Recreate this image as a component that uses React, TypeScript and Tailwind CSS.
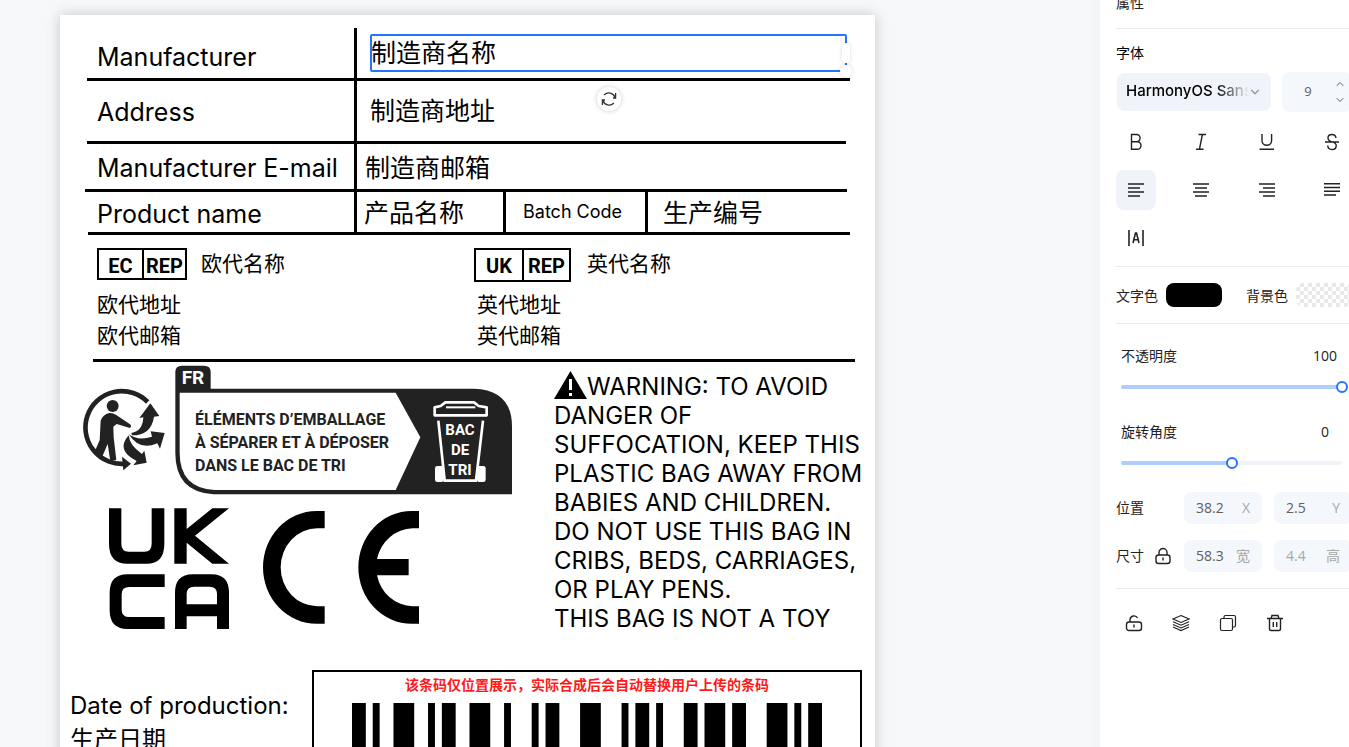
import React, { useState } from 'react';
import { ChevronDown, ChevronUp } from 'lucide-react';

interface IconProps {
  children: React.ReactNode;
}

interface SliderProps {
  id: string;
  label: string;
  min: number;
  max: number;
  value: number;
  onChange: (value: number) => void;
}

interface NumberBoxProps {
  label: string;
  unit: string;
  value: string;
  disabled?: boolean;
}

// [first module, width in modules]
const BARS = [
  [0, 2], [3, 1], [6, 3], [11, 1], [13, 2], [17, 3], [22, 1], [26, 1], [28, 2], [33, 3],
  [39, 1], [41, 2], [44, 1], [48, 2], [51, 3], [55, 2], [60, 3], [64, 1], [66, 2],
];

const Icon: React.FC<IconProps> = ({ children }) => (
  <svg width="18" height="18" viewBox="0 0 18 18" fill="none" stroke="currentColor" strokeWidth="1.4" aria-hidden="true">
    {children}
  </svg>
);

const styleTools = [
  { name: 'Bold', icon: <path d="M4.5 1.5H9.5A3.6 3.6 0 0 1 9.5 8.7H4.5ZM4.5 8.7H10.2A3.8 3.8 0 0 1 10.2 16.3H4.5Z" /> },
  { name: 'Italic', icon: <path d="M6.5 1.5H14M4 16.3H11.5M10.4 1.5L7.4 16.3" /> },
  { name: 'Underline', icon: <path d="M4 1V7.5A4.8 4.8 0 0 0 13.6 7.5V1M1.5 16.3H16" /> },
  { name: 'Strikethrough', icon: <path d="M13 5C12.6 2.5 11 1.5 9 1.5C6.5 1.5 5 3 5 5C5 7.5 7 8.3 9.2 8.9C11.8 9.6 13.2 10.6 13.2 12.7C13.2 15 11.5 16.5 9 16.5C6.5 16.5 4.9 15 4.7 12.5M2 9H16" /> },
];

const alignTools = [
  { name: 'Align left', icon: <path strokeWidth="1.7" d="M1 3H17M1 7H13M1 11H17M1 15H13" /> },
  { name: 'Align center', icon: <path strokeWidth="1.7" d="M1 3H17M3 7H15M1 11H17M3 15H15" /> },
  { name: 'Align right', icon: <path strokeWidth="1.7" d="M1 3H17M5 7H17M1 11H17M5 15H17" /> },
  { name: 'Justify', icon: <path strokeWidth="1.6" d="M1 2.8H17M1 6.5H17M1 10.2H17M1 14H13" /> },
];

const layerTools = [
  { name: 'Unlock', icon: <><rect x="1.5" y="8" width="15" height="8.5" rx="2.5" /><path d="M5 8V5.5A4 4 0 0 1 12.5 4M9 10.5V13.5" /></> },
  { name: 'Layers', icon: <path strokeWidth="1.1" d="M9 1.5L17 5L9 8.5L1 5ZM1 7.7L9 11.2L17 7.7M1 10.4L9 13.9L17 10.4M1 13.1L9 16.6L17 13.1" /> },
  { name: 'Copy', icon: <g strokeWidth="1.2"><rect x="1.5" y="4.5" width="12" height="12" rx="1.5" /><path d="M5 4V3A1.5 1.5 0 0 1 6.5 1.5H15A1.5 1.5 0 0 1 16.5 3V11.5A1.5 1.5 0 0 1 15 13H14" /></g> },
  { name: 'Delete', icon: <path d="M1 4.5H17M5 4.5L6 1.5H12L13 4.5M3.5 4.5V15A1.5 1.5 0 0 0 5 16.5H13A1.5 1.5 0 0 0 14.5 15V4.5M7.3 8V13M10.7 8V13" /> },
];

const FrenchSortingLogo: React.FC = () => (
  <svg className="absolute left-[10px] top-[345px] font-bold [font-family:Roboto,sans-serif]" width="450" height="140" role="img" aria-label="Triman">
    <g transform="scale(0.33333)">
      <path d="M233 126A109 109 0 1 0 166 311" fill="none" stroke="#222" strokeWidth="14" />
      <path d="M156 290L183 311L160 331Z" fill="#222" />
      <circle cx="128" cy="138" r="18" fill="#222" />
      <path d="M92 182Q98 164 118 159Q128 158 140 166L180 193Q186 198 180 204L140 192L130 200L131 232L139 300L121 304L113 252L94 296L72 280L89 240Z" fill="#222" />
      <path d="M184 219Q218 214 220 172L208 174L241 130L268 168L252 170Q244 226 186 226Z" fill="#222" />
      <path d="M176 222Q204 244 246 230L242 214L284 219L270 266L262 250Q208 274 176 222Z" fill="#222" />
      <path d="M176 226Q178 256 216 282L223 272L230 308L190 316L200 303Q136 272 176 226Z" fill="#222" />
      <path d="M316 90V36Q316 17 336 17H402Q422 17 422 36V86H1212Q1326 90 1326 200V403H430Q316 396 316 280Z" fill="#222" />
      <path d="M329 98H977L1051 232L977 390H434Q329 384 329 278Z" fill="#fff" />
      <g fill="none" stroke="#fff" strokeWidth="8">
        <path d="M1094 142L1112 138L1126 127H1212L1226 138L1250 142V166H1094Z" strokeLinejoin="round" />
        <path d="M1128 142H1216" strokeWidth="6" />
        <path d="M1105 182L1124 362H1218L1239 182" />
      </g>
      <rect x="1095" y="318" width="26" height="48" rx="7" fill="#fff" />
      <rect x="1221" y="318" width="26" height="48" rx="7" fill="#fff" />
    </g>
    <g fill="#fff" textAnchor="middle">
      <text x="123" y="24" fontSize="19">FR</text>
      <text x="390" y="75" fontSize="15">BAC</text>
      <text x="390" y="95" fontSize="15">DE</text>
      <text x="390" y="115" fontSize="15">TRI</text>
    </g>
    <g fill="#222" fontSize="16">
      <text x="125" y="65">ÉLÉMENTS D’EMBALLAGE</text>
      <text x="125" y="88">À SÉPARER ET À DÉPOSER</text>
      <text x="125" y="111">DANS LE BAC DE TRI</text>
    </g>
  </svg>
);

const ConformityMarks: React.FC = () => (
  <svg className="absolute left-[30px] top-[480px]" width="350" height="145" viewBox="0 0 1050 435" role="img" aria-label="UKCA CE">
    <path d="M57 40H94V146Q94 170 116 170H163Q185 170 185 146V40H223V146Q223 206 170 206H112Q57 206 57 146Z" />
    <path d="M253 40H290V102L367 40H417L315 122L417 206H367L290 143V206H253Z" />
    <path d="M224 238V276H118Q95 276 95 298V344Q95 366 118 366H224V402H112Q59 402 59 346V294Q59 238 112 238Z" />
    <path fillRule="evenodd" d="M255 402V294Q255 238 308 238H365Q417 238 417 294V402H381V364H290V402ZM290 328H381V297Q381 275 358 275H313Q290 275 290 297Z" />
    <path d="M704 48H680A161 169 0 0 0 680 386H704V334H682A110 117 0 0 1 682 100H704Z" />
    <path d="M987 48H965A160 169 0 0 0 965 386H987V334H968A112 117 0 0 1 861 241H956V192H861A112 117 0 0 1 968 100H987Z" />
  </svg>
);

const LabelPaper: React.FC = () => (
  <div className="relative h-[1000px] w-[815px] shrink-0 bg-white text-black shadow-[0_0_14px_rgba(0,0,0,0.2)] [font-family:Inter,'Noto_Sans_CJK_SC',sans-serif]">
    {/* rules */}
    <div className="absolute left-[27px] top-[63px] h-[3px] w-[763px] bg-black" />
    <div className="absolute left-[27px] top-[126px] h-[3px] w-[759px] bg-black" />
    <div className="absolute left-[25px] top-[174px] h-[3px] w-[762px] bg-black" />
    <div className="absolute left-[28px] top-[217px] h-[3px] w-[762px] bg-black" />
    <div className="absolute left-[33px] top-[344px] h-[3px] w-[762px] bg-black" />
    <div className="absolute left-[294px] top-[13px] h-[205px] w-[3px] bg-black" />
    <div className="absolute left-[443px] top-[175px] h-[43px] w-[3px] bg-black" />
    <div className="absolute left-[585px] top-[175px] h-[43px] w-[3px] bg-black" />

    <div className="whitespace-nowrap text-[25px] leading-8">
      <p className="absolute left-[37px] top-[26px]">Manufacturer</p>
      <p className="absolute left-[37px] top-[81px]">Address</p>
      <p className="absolute left-[37px] top-[137px]">Manufacturer E-mail</p>
      <p className="absolute left-[37px] top-[183px]">Product name</p>
      <p className="absolute left-[311px] top-[22px]">制造商名称</p>
      <p className="absolute left-[310px] top-[80px]">制造商地址</p>
      <p className="absolute left-[305px] top-[137px]">制造商邮箱</p>
      <p className="absolute left-[304px] top-[182px]">产品名称</p>
      <p className="absolute left-[603px] top-[182px]">生产编号</p>
    </div>
    <p className="absolute left-[463px] top-[185px] text-[18px] leading-6">Batch Code</p>
    <p className="absolute left-[10px] top-[675px] whitespace-nowrap text-[24px] leading-8">Date of production:</p>
    <p className="absolute left-[10px] top-[709px] text-[24px] leading-8">生产日期</p>

    <div className="absolute left-[37px] top-[233px] flex h-8 w-[90px] border-2 border-black text-[20px] font-bold leading-8 [font-family:Roboto,sans-serif]">
      <span className="w-[45px] border-r-2 border-black text-center">EC</span>
      <span className="flex-1 text-center">REP</span>
    </div>
    <div className="absolute left-[414px] top-[233px] flex h-[34px] w-[97px] border-2 border-black text-[20px] font-bold leading-8 [font-family:Roboto,sans-serif]">
      <span className="w-12 border-r-2 border-black text-center">UK</span>
      <span className="flex-1 text-center">REP</span>
    </div>
    <div className="whitespace-nowrap text-[21px] leading-8">
      <p className="absolute left-[141px] top-[233px]">欧代名称</p>
      <p className="absolute left-[37px] top-[274px]">欧代地址</p>
      <p className="absolute left-[37px] top-[305px]">欧代邮箱</p>
      <p className="absolute left-[527px] top-[233px]">英代名称</p>
      <p className="absolute left-[417px] top-[274px]">英代地址</p>
      <p className="absolute left-[417px] top-[305px]">英代邮箱</p>
    </div>

    <FrenchSortingLogo />
    <ConformityMarks />

    <p className="absolute left-[494px] top-[356px] whitespace-nowrap text-[24px] leading-[29px]">
      <svg className="inline-block align-[-4px]" width="33" height="28" viewBox="0 0 33 28" aria-hidden="true">
        <path d="M16.5 0L33 28H0Z" />
        <path d="M16.5 8V19M16.5 22V25" stroke="#fff" strokeWidth="3" />
      </svg>
      WARNING: TO AVOID<br />
      DANGER OF<br />
      SUFFOCATION, KEEP THIS<br />
      PLASTIC BAG AWAY FROM<br />
      BABIES AND CHILDREN.<br />
      DO NOT USE THIS BAG IN<br />
      CRIBS, BEDS, CARRIAGES,<br />
      OR PLAY PENS.<br />
      THIS BAG IS NOT A TOY
    </p>

    <div className="absolute left-[252px] top-[655px] flex h-[260px] w-[550px] flex-col items-center border-2 border-black">
      <p className="mt-[3px] whitespace-nowrap text-[14px] font-bold leading-5 text-[#ff1a1a]">
        该条码仅位置展示，实际合成后会自动替换用户上传的条码
      </p>
      <svg className="mt-2" width="470" height="180" viewBox="0 0 68 180" preserveAspectRatio="none" aria-hidden="true">
        {BARS.map(([x, w]) => <rect key={x} x={x} y="0" width={w} height="180" />)}
      </svg>
    </div>

    {/* selection frame and its handles */}
    <div className="absolute left-[310px] top-[19px] h-[38px] w-[477px] rounded-[2px] border-2 border-[#2673ff]">
      <span className="absolute -right-[5px] top-[7px] h-5 w-2 rounded-full bg-white shadow-[0_0_4px_rgba(0,0,0,0.15)]" />
      <span className="absolute -bottom-[7px] -right-[7px] size-3 rounded-full bg-white shadow-[0_0_4px_rgba(0,0,0,0.15)]" />
    </div>
    <button type="button" aria-label="Rotate" className="absolute left-[537px] top-[72px] flex size-6 items-center justify-center rounded-full bg-white text-[#333] shadow-[0_0_5px_rgba(0,0,0,0.2)]">
      <svg width="16" height="16" viewBox="0 0 16 16" fill="none" stroke="currentColor" strokeWidth="1.3" aria-hidden="true">
        <path d="M3.2 4A6.3 6.3 0 0 1 14 6.5M14.6 2V7H12M12.8 12A6.3 6.3 0 0 1 2 9.500M1.400 14V9H4" />
      </svg>
    </button>
  </div>
);

const Slider: React.FC<SliderProps> = ({ id, label, min, max, value, onChange }) => (
  <div>
    <div className="flex justify-between pl-[5px] leading-5">
      <label htmlFor={id}>{label}</label>
      <output htmlFor={id} className="w-[54px] text-center">{value}</output>
    </div>
    <div className="mt-[14px] -ml-px grid w-[233px] items-center">
      <div className="col-start-1 row-start-1 mx-[6px] h-1 rounded-full bg-[#f0f4fa]">
        <div className="h-1 rounded-full bg-[#b0cdfd]" style={{ width: `${((value - min) / (max - min)) * 100}%` }} />
      </div>
      <input
        id={id}
        type="range"
        min={min}
        max={max}
        value={value}
        onChange={(e) => onChange(Number(e.target.value))}
        className="col-start-1 row-start-1 h-[14px] w-full appearance-none bg-transparent [&::-webkit-slider-thumb]:size-3 [&::-webkit-slider-thumb]:appearance-none [&::-webkit-slider-thumb]:rounded-full [&::-webkit-slider-thumb]:border-2 [&::-webkit-slider-thumb]:border-solid [&::-webkit-slider-thumb]:border-[#2673ff] [&::-webkit-slider-thumb]:bg-white"
      />
    </div>
  </div>
);

const NumberBox: React.FC<NumberBoxProps> = ({ label, unit, value, disabled }) => (
  <label className="flex h-8 w-[78px] items-center justify-between rounded-lg bg-[#f4f7fc] px-3 pb-0.5 text-[#a8a8a8]">
    <input
      type="text"
      aria-label={label}
      defaultValue={value}
      disabled={disabled}
      className="w-8 bg-transparent text-[#606060] disabled:text-[#a8a8a8]"
    />
    {unit}
  </label>
);

const PropertiesPanel: React.FC = () => {
  const [opacity, setOpacity] = useState(100);
  const [rotation, setRotation] = useState(0);
  const [align, setAlign] = useState('Align left');

  return (
    <aside className="w-[249px] shrink-0 overflow-hidden bg-white text-[14px] text-[#222]">
      {/* content is wider than the visible column and scrolled slightly */}
      <div className="-mt-[7px] w-[268px] px-4">
        <h2 className="border-b border-[#eaebed] pb-[15px] leading-5">属性</h2>
        <h3 className="mt-[14px] leading-5 text-black">字体</h3>
        <div className="mt-[9px] flex items-center gap-[11px]">
          <div className="relative ml-px h-[38px] w-[154px] rounded-lg bg-[#f0f4fa]">
            <select
              aria-label="字体"
              className="h-9 w-[132px] appearance-none bg-transparent pl-[9px] text-[15px] font-medium text-black [font-family:Inter,sans-serif] [mask-image:linear-gradient(to_right,#000_75%,transparent)]"
            >
              <option>HarmonyOS Sans</option>
            </select>
            <ChevronDown className="pointer-events-none absolute right-[9px] top-3 text-[#8f949c]" size={14} strokeWidth={2} />
          </div>
          <div className="flex h-10 w-[70px] items-center rounded-lg bg-[#f4f7fc]">
            <input type="text" aria-label="字号" defaultValue="9" className="w-[52px] bg-transparent text-center text-[13px] text-[#606060]" />
            <div className="flex flex-col gap-1 text-[#606060]">
              <button type="button" aria-label="Increase"><ChevronUp size={12} strokeWidth={2} /></button>
              <button type="button" aria-label="Decrease"><ChevronDown size={12} strokeWidth={2} /></button>
            </div>
          </div>
        </div>

        <div className="mt-[10px] flex justify-between">
          {styleTools.map((tool) => (
            <button key={tool.name} type="button" aria-label={tool.name} className="flex size-10 items-center justify-center rounded-lg">
              <Icon>{tool.icon}</Icon>
            </button>
          ))}
        </div>
        <div className="mt-2 flex justify-between">
          {alignTools.map((tool) => (
            <button
              key={tool.name}
              type="button"
              aria-label={tool.name}
              onClick={() => setAlign(tool.name)}
              className={`flex size-10 items-center justify-center rounded-lg ${align === tool.name ? 'bg-[#f0f4fa]' : ''}`}
            >
              <Icon>{tool.icon}</Icon>
            </button>
          ))}
        </div>
        <button type="button" aria-label="Letter spacing" className="mt-2 flex size-10 items-center justify-center rounded-lg">
          <Icon><path strokeWidth="1.6" d="M2 1V17M16 1V17M6 14L8.500 4H9.500L12 14M6.800 10.800H11.200" /></Icon>
        </button>

        <div className="mt-2 flex items-center border-y border-[#eaebed] py-4">
          <span>文字色</span>
          <button type="button" aria-label="文字色" className="ml-2 h-6 w-14 rounded-lg bg-black" />
          <span className="ml-6">背景色</span>
          <button type="button" aria-label="背景色" className="ml-2 h-6 w-14 rounded-lg bg-[repeating-conic-gradient(#e8e8e8_0_25%,#fff_0_50%)] bg-[length:8px_8px]" />
        </div>

        <div className="mt-[22px] flex flex-col gap-7">
          <Slider id="opacity" label="不透明度" min={0} max={100} value={opacity} onChange={setOpacity} />
          <Slider id="rotation" label="旋转角度" min={-180} max={180} value={rotation} onChange={setRotation} />
        </div>

        <div className="mt-[22px] flex flex-col gap-4">
          <div className="flex items-center gap-3">
            <span className="w-14 pb-0.5">位置</span>
            <NumberBox label="X" unit="X" value="38.2" />
            <NumberBox label="Y" unit="Y" value="2.5" />
          </div>
          <div className="flex items-center gap-3">
            <div className="flex w-14 items-center justify-between">
              <span className="pb-0.5">尺寸</span>
              <button type="button" aria-label="Lock ratio">
                <Icon>
                  <rect x="2" y="8" width="14" height="8.500" rx="2.500" />
                  <path d="M5 8V5.500A4 4 0 0 1 13 5.500V8M9 10.500V13.500" />
                </Icon>
              </button>
            </div>
            <NumberBox label="宽" unit="宽" value="58.3" />
            <NumberBox label="高" unit="高" value="4.4" disabled />
          </div>
        </div>

        <div className="mt-4 flex gap-[29px] border-t border-[#eaebed] px-[9px] pt-[25px]">
          {layerTools.map((tool) => (
            <button key={tool.name} type="button" aria-label={tool.name}>
              <Icon>{tool.icon}</Icon>
            </button>
          ))}
        </div>
      </div>
    </aside>
  );
};

const App: React.FC = () => (
  <div className="flex h-screen overflow-hidden bg-[#f7f8fa] [font-family:'Open_Sans','Noto_Sans_CJK_SC',sans-serif]">
    <main className="min-w-0 flex-1 overflow-hidden border-r-8 border-[#f3f5f8] pl-[60px] pt-[15px]">
      <LabelPaper />
    </main>
    <PropertiesPanel />
  </div>
);

export default App;
